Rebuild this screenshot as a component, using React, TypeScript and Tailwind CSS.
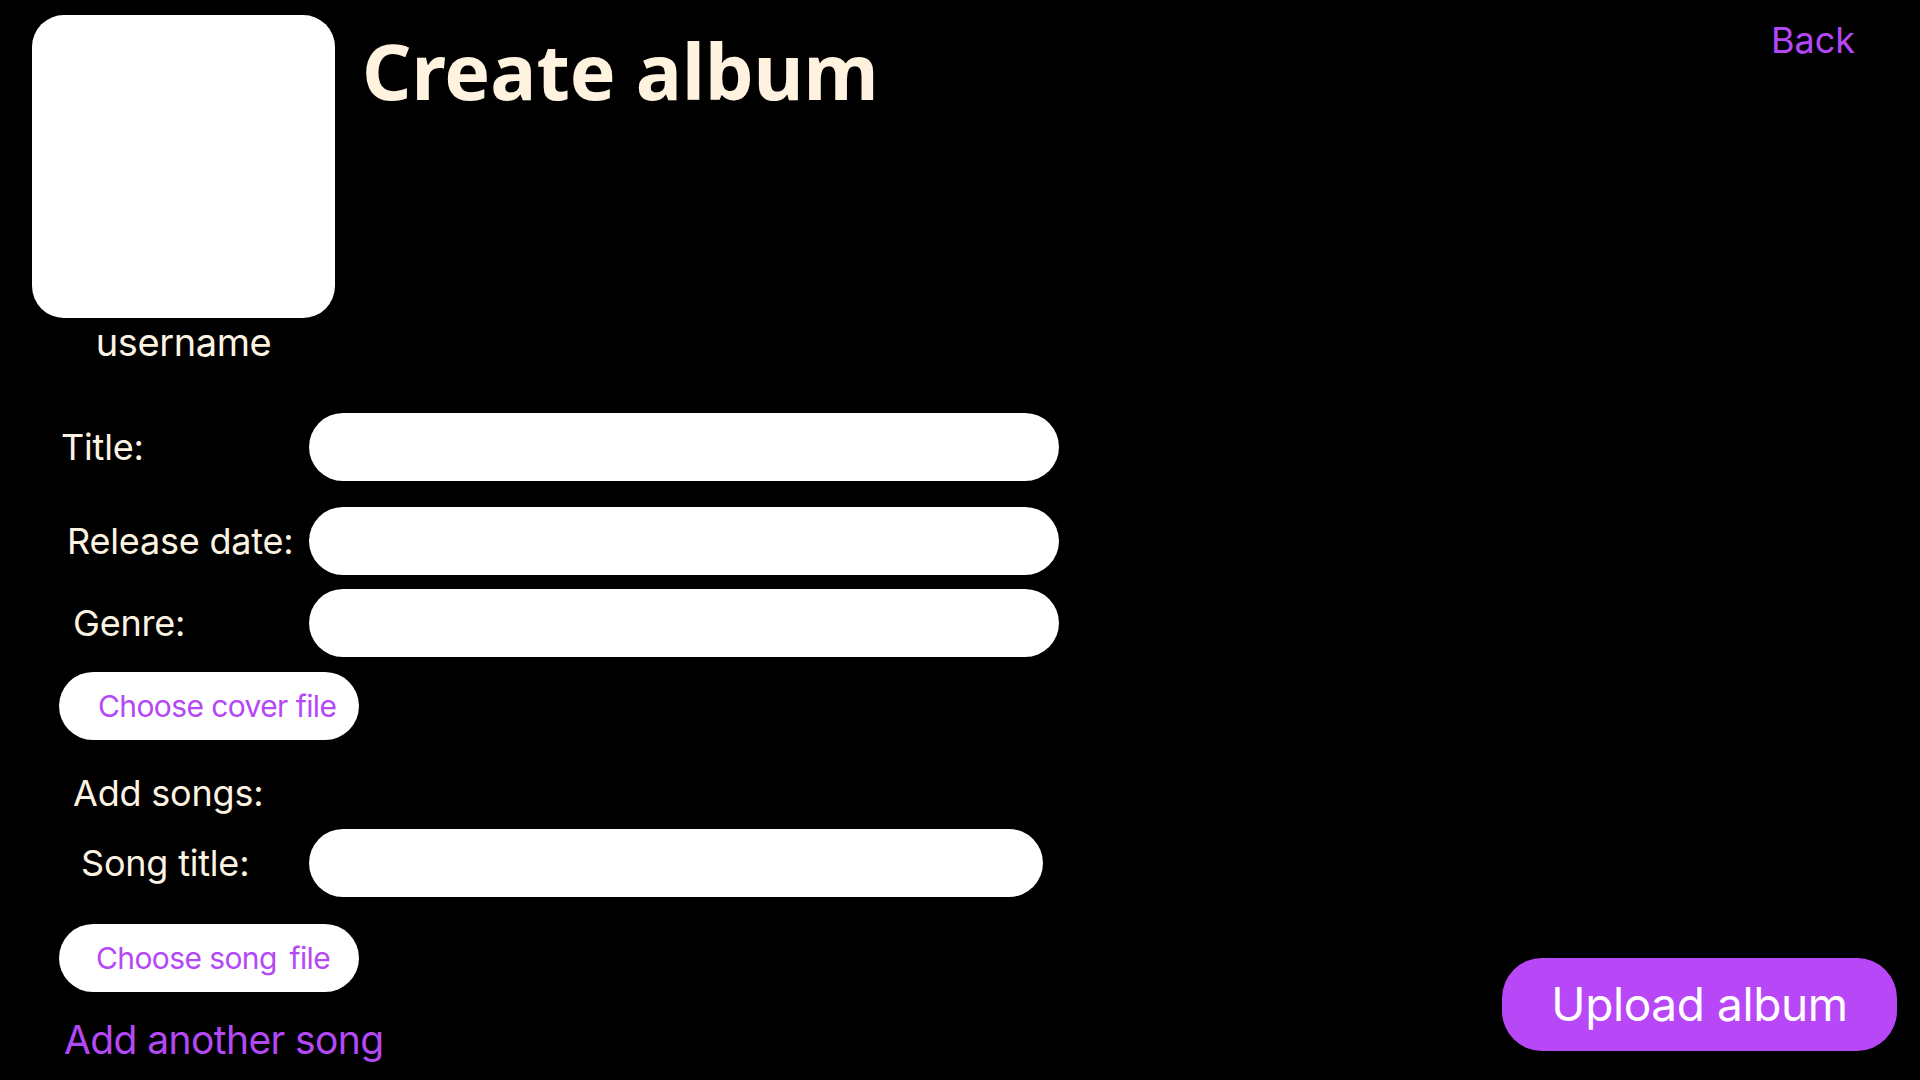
const label = "text-[36px] leading-[44px] text-[#fdf3e2] tracking-[-0.2px]";

function FieldRow({ text, pad, width }: { text: string; pad: string; width: string }) {
  return (
    <div className="flex items-center">
      <div className={`w-[309px] shrink-0 ${pad}`}>
        <span className={label}>{text}</span>
      </div>
      <div className={`h-[68px] ${width} rounded-full bg-white`} />
    </div>
  );
}

function FileButton({ text, pad }: { text: string; pad: string }) {
  return (
    <button className={`ml-[59px] flex h-[68px] w-[300px] items-center rounded-full bg-white ${pad} text-[30px] tracking-[-0.6px] text-[#b548f6]`}>
      {text}
    </button>
  );
}

export default function App() {
  return (
    <div className="relative h-[1080px] w-full overflow-hidden bg-black font-['Inter',sans-serif]">
      <header className="flex items-start justify-between pt-[15px] pr-[65px]">
        <div className="flex items-start">
          <div className="ml-[32px] flex w-[303px] flex-col items-center">
            <div className="h-[303px] w-[303px] rounded-[32px] bg-white" />
            <p className="mt-[2px] text-[38px] leading-[44px] tracking-[-0.4px] text-[#fdf3e2]">username</p>
          </div>
          <h1 className="ml-[27px] mt-[17px] font-['Noto_Sans',sans-serif] text-[77px] font-bold leading-none text-[#fff3e0]">
            Create album
          </h1>
        </div>
        <a className="mt-[7px] text-[36px] leading-none text-[#b548f6]">Back</a>
      </header>

      <main className="mt-[49px] flex flex-col">
        <FieldRow text="Title:" pad="pl-[61px]" width="w-[750px]" />
        <div className="mt-[26px]">
          <FieldRow text="Release date:" pad="pl-[67px]" width="w-[750px]" />
        </div>
        <div className="mt-[14px]">
          <FieldRow text="Genre:" pad="pl-[73px]" width="w-[750px]" />
        </div>
        <div className="mt-[15px]">
          <FileButton text="Choose cover file" pad="pl-[39px]" />
        </div>

        <p className={`mt-[31px] pl-[73px] ${label}`}>Add songs:</p>
        <div className="mt-[14px]">
          <FieldRow text="Song title:" pad="pl-[81px]" width="w-[734px]" />
        </div>
        <div className="mt-[27px]">
          <FileButton text={"Choose song\u2009 file"} pad="pl-[37px]" />
        </div>

        <div className="mt-[26px] pl-[64px]">
          <a className="text-[39px] leading-[44px] tracking-[-0.6px] text-[#b548f6]">Add another song</a>
        </div>
      </main>

      <button className="absolute bottom-[29px] right-[23px] flex h-[93px] w-[395px] items-center justify-center rounded-[40px] bg-[#b847f8] text-[46px] tracking-[-0.4px] text-white">
        Upload album
      </button>
    </div>
  );
}
